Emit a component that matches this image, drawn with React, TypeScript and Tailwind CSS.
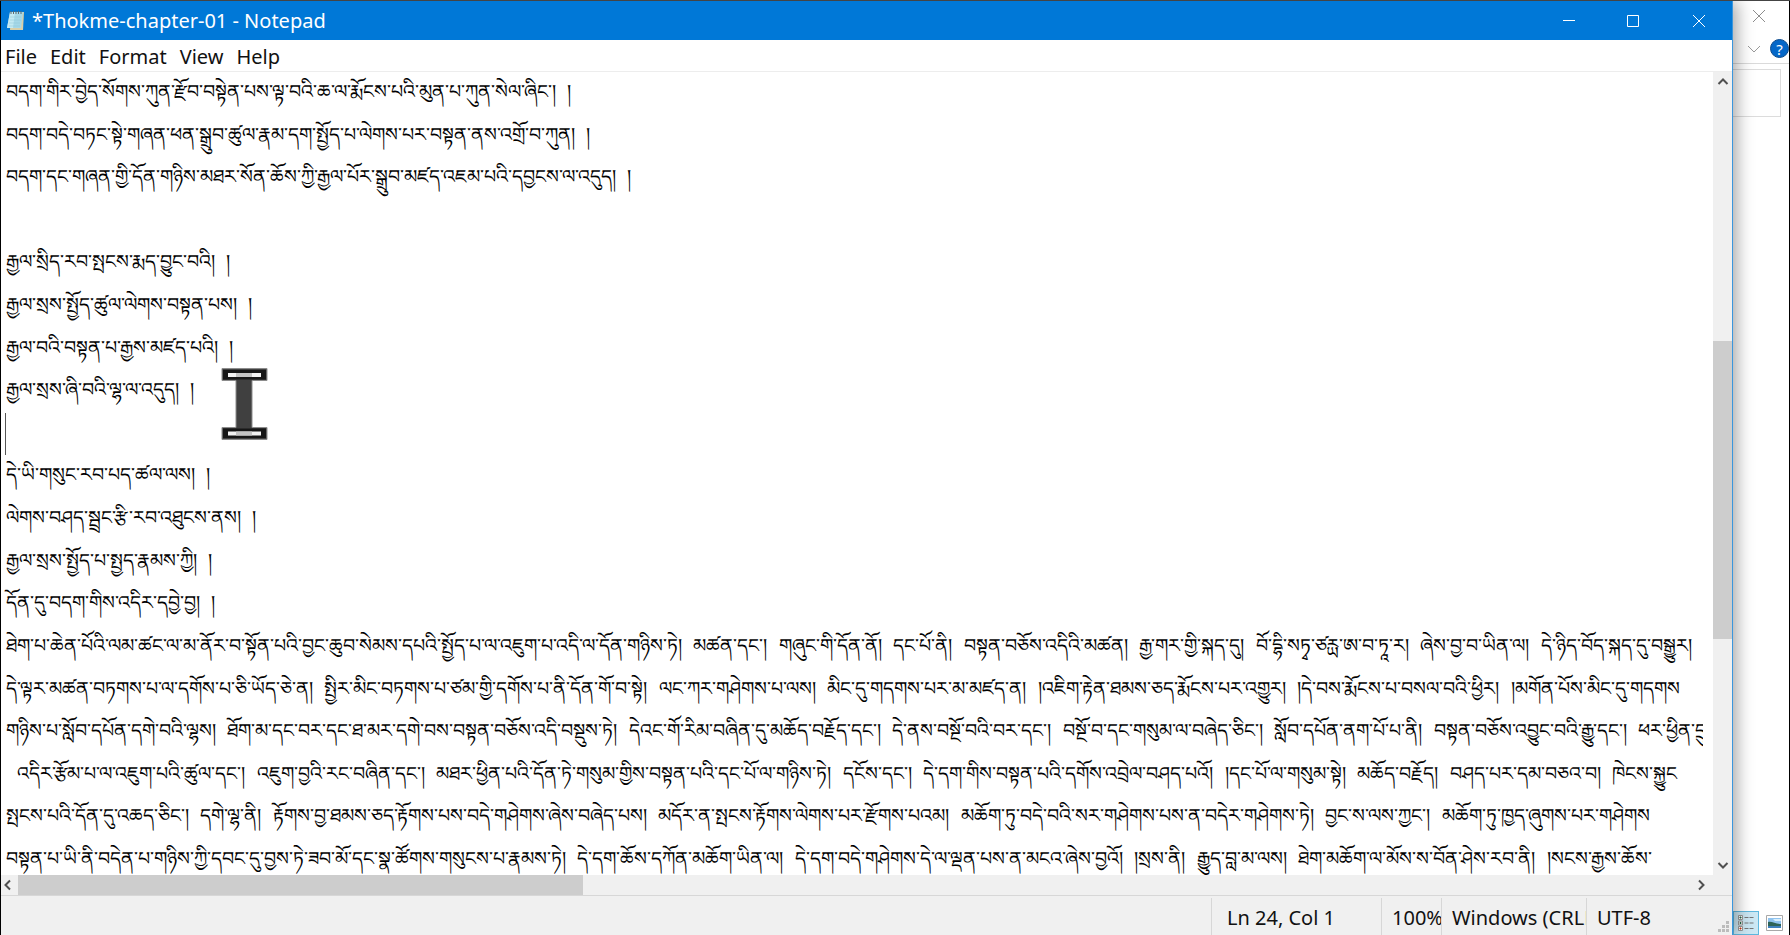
import React from "react";

const TEXT = [
  "བདག་གིར་བྱེད་སོགས་ཀུན་རྫོབ་བསྟེན་པས་ལྟ་བའི་ཆ་ལ་རྨོངས་པའི་མུན་པ་ཀུན་སེལ་ཞིང་། །",
  "བདག་བདེ་བཏང་སྟེ་གཞན་ཕན་སྒྲུབ་ཚུལ་རྣམ་དག་སྤྱོད་པ་ལེགས་པར་བསྟན་ནས་འགྲོ་བ་ཀུན། །",
  "བདག་དང་གཞན་གྱི་དོན་གཉིས་མཐར་སོན་ཆོས་ཀྱི་རྒྱལ་པོར་སྒྲུབ་མཛད་འཇམ་པའི་དབྱངས་ལ་འདུད། །",
  "",
  "རྒྱལ་སྲིད་རབ་སྤངས་རྨད་བྱུང་བའི། །",
  "རྒྱལ་སྲས་སྤྱོད་ཚུལ་ལེགས་བསྟན་པས། །",
  "རྒྱལ་བའི་བསྟན་པ་རྒྱས་མཛད་པའི། །",
  "རྒྱལ་སྲས་ཞི་བའི་ལྷ་ལ་འདུད། །",
  "",
  "དེ་ཡི་གསུང་རབ་པད་ཚལ་ལས། །",
  "ལེགས་བཤད་སྦྲང་རྩི་རབ་འཐུངས་ནས། །",
  "རྒྱལ་སྲས་སྤྱོད་པ་སྤྱད་རྣམས་ཀྱི། །",
  "དོན་དུ་བདག་གིས་འདིར་དབྱེ་བྱ། །",
  "ཐེག་པ་ཆེན་པོའི་ལམ་ཚང་ལ་མ་ནོར་བ་སྟོན་པའི་བྱང་ཆུབ་སེམས་དཔའི་སྤྱོད་པ་ལ་འཇུག་པ་འདི་ལ་དོན་གཉིས་ཏེ། མཚན་དང་། གཞུང་གི་དོན་ནོ། དང་པོ་ནི། བསྟན་བཅོས་འདིའི་མཚན། རྒྱ་གར་གྱི་སྐད་དུ། བོ་དྷི་སཏྭ་ཙརྻ་ཨ་བ་ཏཱ་ར། ཞེས་བྱ་བ་ཡིན་ལ། དེ་ཉིད་བོད་སྐད་དུ་བསྒྱུར།",
  "དེ་ལྟར་མཚན་བཏགས་པ་ལ་དགོས་པ་ཅི་ཡོད་ཅེ་ན། སྤྱིར་མིང་བཏགས་པ་ཙམ་གྱི་དགོས་པ་ནི་དོན་གོ་བ་སྟེ། ལང་ཀར་གཤེགས་པ་ལས། མིང་དུ་གདགས་པར་མ་མཛད་ན། །འཇིག་རྟེན་ཐམས་ཅད་རྨོངས་པར་འགྱུར། །དེ་བས་རྨོངས་པ་བསལ་བའི་ཕྱིར། །མགོན་པོས་མིང་དུ་གདགས",
  "གཉིས་པ་སློབ་དཔོན་དགེ་བའི་ལྷས། ཐོག་མ་དང་བར་དང་ཐ་མར་དགེ་བས་བསྟན་བཅོས་འདི་བསྡུས་ཏེ། དེའང་གོ་རིམ་བཞིན་དུ་མཆོད་བརྗོད་དང་། དེ་ནས་བསྔོ་བའི་བར་དང་། བསྔོ་བ་དང་གསུམ་ལ་བཞེད་ཅིང་། སློབ་དཔོན་ནག་པོ་པ་ནི། བསྟན་བཅོས་འབྱུང་བའི་རྒྱུ་དང་། ཕར་ཕྱིན་དྲུག",
  " འདིར་རྩོམ་པ་ལ་འཇུག་པའི་ཚུལ་དང་། འཇུག་བྱའི་རང་བཞིན་དང་། མཐར་ཕྱིན་པའི་དོན་ཏེ་གསུམ་གྱིས་བསྟན་པའི་དང་པོ་ལ་གཉིས་ཏེ། དངོས་དང་། དེ་དག་གིས་བསྟན་པའི་དགོས་འབྲེལ་བཤད་པའོ། །དང་པོ་ལ་གསུམ་སྟེ། མཆོད་བརྗོད། བཤད་པར་དམ་བཅའ་བ། ཁེངས་སྐྱུང",
  "སྤངས་པའི་དོན་དུ་འཆད་ཅིང་། དགེ་ལྷ་ནི། རྟོགས་བྱ་ཐམས་ཅད་རྟོགས་པས་བདེ་གཤེགས་ཞེས་བཞེད་པས། མདོར་ན་སྤངས་རྟོགས་ལེགས་པར་རྫོགས་པའམ། མཆོག་ཏུ་བདེ་བའི་སར་གཤེགས་པས་ན་བདེར་གཤེགས་ཏེ། བྱང་ས་ལས་ཀྱང་། མཆོག་ཏུ་ཁྱད་ཞུགས་པར་གཤེགས",
  "བསྟན་པ་ཡི་ནི་བདེན་པ་གཉིས་ཀྱི་དབང་དུ་བྱས་ཏེ་ཟབ་མོ་དང་སྣ་ཚོགས་གསུངས་པ་རྣམས་ཏེ། དེ་དག་ཆོས་དཀོན་མཆོག་ཡིན་ལ། དེ་དག་བདེ་གཤེགས་དེ་ལ་ལྡན་པས་ན་མངའ་ཞེས་བྱའོ། །སྲས་ནི། རྒྱུད་བླ་མ་ལས། ཐེག་མཆོག་ལ་མོས་ས་བོན་ཤེས་རབ་ནི། །སངས་རྒྱས་ཆོས་",
].join("\n");

function Glyph({ d, size, stroke, width = 1 }: { d: string; size: number; stroke: string; width?: number }) {
  return (
    <svg width={size} height={size} viewBox="0 0 12 12" fill="none" stroke={stroke} strokeWidth={width}>
      <path d={d} />
    </svg>
  );
}

function NotepadIcon() {
  return (
    <svg width="18" height="21" viewBox="0 0 18 21">
      <path d="M4 2h13l-1 18H3z" fill="#d9cfa8" />
      <path d="M3 2h13l-2 16H0z" fill="#a5d8e8" />
      <path d="M3 2h5L6 18H0z" fill="#c4eaf3" />
      <path d="M3 7h11M3 10h11M2 13h11M2 16h11" stroke="#8cc4d4" strokeWidth=".5" />
      <path d="M4 1v3M6.5 1v3M9 1v3M11.500 1v3M14 1v3" stroke="#5d6b70" strokeWidth="1" />
    </svg>
  );
}

function TitleBar() {
  return (
    <header className="flex h-[39px] shrink-0 items-center bg-[#0078d7] text-white">
      <div className="flex flex-1 items-center gap-[7px] pl-1.5">
        <NotepadIcon />
        <h1 className="text-[20px] leading-6">*Thokme-chapter-01 - Notepad</h1>
      </div>
      <button aria-label="Minimize" className="flex h-full w-[62px] items-center justify-center">
        <Glyph d="M0 5.500h12" size={12} stroke="#fff" />
      </button>
      <button aria-label="Maximize" className="flex h-full w-[66px] items-center justify-center">
        <Glyph d="M.5.500h11v11H.5z" size={12} stroke="#fff" />
      </button>
      <button aria-label="Close" className="flex h-full w-[66px] items-center justify-center">
        <Glyph d="M0 0l12 12M12 0L0 12" size={12} stroke="#fff" />
      </button>
    </header>
  );
}

function Editor() {
  return (
    <main className="relative flex min-h-0 flex-1 overflow-hidden bg-white pr-2.5">
      <textarea
        aria-label="Text editor"
        wrap="off"
        spellCheck={false}
        defaultValue={TEXT}
        className="-mt-0.5 block min-w-0 flex-1 resize-none overflow-hidden pl-[5px] font-['DejaVu_Sans_Mono','Noto_Sans',monospace] text-[19px] leading-[2.243] text-black outline-none"
      />
      <span className="absolute top-[341px] left-[4px] h-[42px] w-px bg-[#555]" />
      <svg className="absolute top-[295px] left-[219px]" width="50" height="74" viewBox="0 0 50 74">
        <path d="M2 1.500h45v12H32v47h15v12H2v-12h14v-47H2z" fill="#404040" stroke="#8c8c8c" strokeWidth="1" strokeLinejoin="round" />
        <path d="M3 3h43v9.500H3zM3 61.500h43V71H3z" fill="#161616" />
        <path d="M8 6h33v4H8zM8 64.500h33v4H8z" fill="#f2f2f2" />
        <path d="M16 6h16v4H16zM16 64.500h16v4H16z" fill="#c4c4c4" />
      </svg>
    </main>
  );
}

function VerticalScroll() {
  return (
    <div className="flex w-[19px] shrink-0 flex-col bg-[#f0f0f0]">
      <button aria-label="Scroll up" className="flex h-5 items-center justify-center">
        <Glyph d="M1.500 8L6 3.500 10.500 8" size={12} stroke="#505050" width={2} />
      </button>
      <div className="flex-[249]" />
      <div className="flex-[298] bg-[#cdcdcd]" />
      <div className="flex-[216]" />
      <button aria-label="Scroll down" className="flex h-5 items-center justify-center">
        <Glyph d="M1.500 4L6 8.500 10.500 4" size={12} stroke="#505050" width={2} />
      </button>
    </div>
  );
}

function HorizontalScroll() {
  return (
    <div className="flex h-5 shrink-0 bg-[#f0f0f0] pr-[21px]">
      <button aria-label="Scroll left" className="flex w-[17px] items-center justify-center pr-1">
        <Glyph d="M8 1.500L3.500 6 8 10.500" size={12} stroke="#505050" width={2} />
      </button>
      <div className="flex-[565] bg-[#cdcdcd]" />
      <div className="flex-[1109]" />
      <button aria-label="Scroll right" className="flex w-5 items-center justify-center">
        <Glyph d="M4 1.500L8.500 6 4 10.500" size={12} stroke="#505050" width={2} />
      </button>
    </div>
  );
}

function StatusBar() {
  return (
    <footer className="relative flex h-10 shrink-0 justify-end border-t border-[#d7d7d7] bg-[#f0f0f0] pt-0.5 text-[20px] leading-10 whitespace-nowrap text-[#111]">
      <span className="w-[170px] border-l border-[#d7d7d7] pl-[15px]">Ln 24, Col 1</span>
      <span className="w-[60px] overflow-hidden border-l border-[#d7d7d7] pl-[10px]">100%</span>
      <span className="w-[145px] overflow-hidden border-l border-[#d7d7d7] pl-[10px]">Windows (CRLF)</span>
      <span className="w-[146px] border-l border-[#d7d7d7] pl-[10px]">UTF-8</span>
      <svg className="absolute right-0.5 bottom-0.5" width="12" height="12" fill="#bcbcbc">
        <path d="M8 0h3v3H8zM4 4h3v3H4zM8 4h3v3H8zM0 8h3v3H0zM4 8h3v3H4zM8 8h3v3H8z" />
      </svg>
    </footer>
  );
}

function BackgroundWindow() {
  return (
    <aside className="flex w-[57px] shrink-0 flex-col border-r border-black bg-white">
      <div className="flex h-[33px] items-center justify-center">
        <button aria-label="Close background window" className="pr-1 pb-1">
          <Glyph d="M0 0l12 12M12 0L0 12" size={12} stroke="#8c8c8c" />
        </button>
      </div>
      <div className="flex h-[30px] items-center justify-end gap-2.5 border-b border-[#dadada]">
        <button aria-label="Expand ribbon">
          <Glyph d="M0 3l6 6 6-6" size={12} stroke="#999" />
        </button>
        <button
          aria-label="Help"
          className="flex size-[19px] items-center justify-center rounded-full border border-[#0b4a8c] bg-[#0467c8] text-[15px] leading-4 text-white"
        >
          ?
        </button>
      </div>
      <div className="mt-[5px] mr-2 h-12 border border-l-0 border-[#dcdcdc]" />
      <div className="mt-auto flex h-6 items-stretch">
        <button aria-label="Details view" className="flex w-[26px] items-center justify-center border border-[#5fb8de] bg-[#cce8f4]">
          <svg width="18" height="18" viewBox="0 0 18 18" fill="none">
            <path d="M1.500 1.500h4v4h-4zM1.500 7h4v4h-4zM1.500 12.500h4v4h-4z" fill="#fff" stroke="#999" />
            <path d="M3 3h1v1H3zM3 8.500h1v1H3z" fill="#264" stroke="#264" />
            <path d="M3 14h1v1H3z" fill="#c31" stroke="#c31" />
            <path d="M7.500 3.500h10M7.500 9h10M7.500 14.500h10" stroke="#777" strokeDasharray="4 1" />
          </svg>
        </button>
        <button aria-label="Large icons view" className="flex flex-1 items-center justify-center">
          <svg width="17" height="16" viewBox="0 0 17 16">
            <path d="M.5.500h16v15H.5z" fill="#fff" stroke="#a8a8a8" />
            <path d="M2 3h13v10H2z" fill="#8fc3ef" />
            <path d="M2 7c4-1 7 2 13 2v2H2z" fill="#2d6358" />
            <path d="M2 11h13v2H2z" fill="#3c7fbd" />
            <path d="M7 4h8v2H9z" fill="#d9effc" />
          </svg>
        </button>
      </div>
    </aside>
  );
}

export default function App() {
  return (
    <div className="flex h-screen overflow-hidden border-t border-[#444] bg-white font-['Noto_Sans','Open_Sans',sans-serif]">
      <section className="relative z-10 flex min-w-0 flex-1 flex-col border-r border-l border-r-[#3a96dd] border-l-black shadow-[4px_0_16px_rgba(0,0,0,0.35)]">
        <TitleBar />
        <nav className="flex h-8 shrink-0 items-center gap-[13px] border-b border-[#ededed] bg-white pt-0.5 pl-1 text-[20px] leading-6 text-[#111]">
          {["File", "Edit", "Format", "View", "Help"].map((m) => (
            <button key={m}>{m}</button>
          ))}
        </nav>
        <div className="flex min-h-0 flex-1">
          <Editor />
          <VerticalScroll />
        </div>
        <HorizontalScroll />
        <StatusBar />
      </section>
      <BackgroundWindow />
    </div>
  );
}
